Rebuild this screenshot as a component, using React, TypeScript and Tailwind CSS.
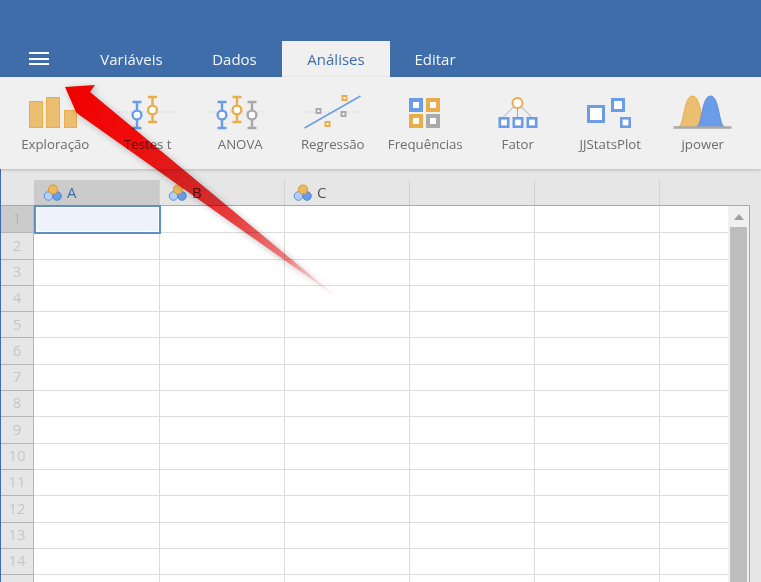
const font = { fontFamily: '"Open Sans", "Noto Sans", sans-serif' };

const BLUE = "#6b9ce8";
const ORANGE = "#e9ad4a";
const GRAY = "#a9a9a9";

const Whisker = ({ x, top, bottom, cy, color }: { x: number; top: number; bottom: number; cy: number; color: string }) => (
  <g stroke={color} strokeWidth="2.4" fill="none">
    <path d={`M${x - 4.5} ${top}H${x + 4.5}M${x} ${top}V${bottom}M${x - 4.5} ${bottom}H${x + 4.5}`} />
    <circle cx={x} cy={cy} r="4.4" fill="#fff" />
  </g>
);

const Box = ({ x, y, s, color, w = 2 }: { x: number; y: number; s: number; color: string; w?: number }) => (
  <rect x={x + w / 2} y={y + w / 2} width={s - w} height={s - w} fill="#fff" stroke={color} strokeWidth={w} />
);

const Dots = ({ x1, x2, y }: { x1: number; x2: number; y: number }) => (
  <path d={`M${x1} ${y}H${x2}`} stroke="#b9c6d8" strokeWidth="1" strokeDasharray="1 3" />
);

// each icon is drawn in a 92x50 box whose origin is the item's top left corner
const icons: { label: string; icon: React.ReactNode }[] = [
  {
    label: "Exploração",
    icon: (
      <g fill="#ecbe70" stroke="#e9ad4a" strokeWidth="1">
        <rect x="20.5" y="16.5" width="13" height="26" />
        <rect x="37.5" y="12.5" width="13" height="30" />
        <rect x="55.5" y="25.5" width="12" height="17" />
      </g>
    ),
  },
  {
    label: "Testes t",
    icon: (
      <g transform="translate(-101.5 0)">
        <Dots x1={118} x2={175} y={27} />
        <Whisker x={136.5} top={17} bottom={43} cy={30} color={BLUE} />
        <Whisker x={152} top={12} bottom={37} cy={25} color={ORANGE} />
      </g>
    ),
  },
  {
    label: "ANOVA",
    icon: (
      <g transform="translate(-194 0)">
        <Dots x1={210} x2={270} y={27} />
        <Whisker x={222} top={17} bottom={43} cy={30} color={BLUE} />
        <Whisker x={237} top={12} bottom={37} cy={25} color={ORANGE} />
        <Whisker x={252} top={17} bottom={43} cy={30} color={GRAY} />
      </g>
    ),
  },
  {
    label: "Regressão",
    icon: (
      <g transform="translate(-286.5 0)">
        <Dots x1={304} x2={362} y={27} />
        <path d="M304 43L360 11" stroke={BLUE} strokeWidth="1.6" />
        <Box x={315} y={23} s={6} color={GRAY} />
        <Box x={341} y={10} s={6} color={ORANGE} />
        <Box x={340} y={26} s={6} color={GRAY} />
        <Box x={324} y={36} s={6} color={ORANGE} />
      </g>
    ),
  },
  {
    label: "Frequências",
    icon: (
      <g transform="translate(-379 0)">
        <Box x={409} y={13} s={14} color={BLUE} w={4} />
        <Box x={426} y={13} s={14} color={ORANGE} w={4} />
        <Box x={409} y={29} s={14} color={ORANGE} w={4} />
        <Box x={426} y={29} s={14} color={GRAY} w={4} />
      </g>
    ),
  },
  {
    label: "Fator",
    icon: (
      <g transform="translate(-471.5 0)">
        <path d="M513 22L503 32M517 22V32M521 22L531 32" stroke={GRAY} strokeWidth="1" />
        <circle cx="517" cy="18" r="5" fill="#fff" stroke={ORANGE} strokeWidth="2" />
        <Box x={498} y={32} s={11} color={BLUE} w={2.6} />
        <Box x={512} y={32} s={11} color={BLUE} w={2.6} />
        <Box x={526} y={32} s={11} color={BLUE} w={2.6} />
      </g>
    ),
  },
  {
    label: "JJStatsPlot",
    icon: (
      <g transform="translate(-564 0)">
        <Box x={587} y={20} s={18} color={BLUE} w={3} />
        <Box x={611} y={13} s={14} color={BLUE} w={3} />
        <Box x={620} y={32} s={11} color={BLUE} w={2.6} />
      </g>
    ),
  },
  {
    label: "jpower",
    icon: (
      <g transform="translate(-656.5 0)">
        <path d="M678 42C684 40 683 11 692 11C701 11 700 40 706 42Z" fill="#ecbe70" stroke="#e9ad4a" />
        <path d="M696 42C702 40 701 11 710 11C719 11 718 40 724 42Z" fill="#6b9ce8" stroke="#5f8fd8" />
        <path d="M673 42.5H731" stroke={GRAY} strokeWidth="2.4" />
      </g>
    ),
  },
];

const columns = ["A", "B", "C", "", "", ""];
const rows = Array.from({ length: 15 }, (_, i) => i + 1);
const colWidth = ["w-[126px] pl-[9px]", "w-[125px] pl-[8px]", "w-[125px] pl-[8px]", "w-[125px]", "w-[125px]", "w-[68px] border-r-0"];

const VarIcon = () => (
  <svg width="20" height="18" viewBox="0 0 20 18" className="shrink-0">
    <circle cx="5.5" cy="12" r="4.3" fill="#b5cef5" stroke="#5a8fe0" strokeWidth="1" />
    <circle cx="14" cy="12" r="4.3" fill="#6b9ce8" stroke="#4f85d8" strokeWidth="1" />
    <circle cx="10" cy="5.5" r="4.6" fill="#ecb95f" stroke="#d99a35" strokeWidth="1" />
  </svg>
);

export default function App() {
  return (
    <div className="relative flex h-[582px] w-[761px] flex-col overflow-hidden bg-[#e6e6e6]" style={font}>
      <header className="flex h-[77px] shrink-0 items-end bg-[#3e6da9]">
        <div className="flex h-[36px] w-[76px] items-center pb-[1px] pl-[29px]">
          <div className="flex w-[20px] flex-col gap-[3.5px]">
            <div className="h-[2px] bg-white" />
            <div className="h-[2px] bg-white" />
            <div className="h-[2px] bg-white" />
          </div>
        </div>
        <div className="flex h-[36px] w-[111px] items-center justify-center text-[15px] text-[#f2f5fa]">Variáveis</div>
        <div className="flex h-[36px] w-[95px] items-center justify-center text-[15px] text-[#f2f5fa]">Dados</div>
        <div className="flex h-[36px] w-[108px] items-center justify-center bg-[#f0f0f0] text-[15px] text-[#3e6da9]">Análises</div>
        <div className="flex h-[36px] w-[90px] items-center justify-center text-[15px] text-[#f2f5fa]">Editar</div>
      </header>

      <div className="z-10 flex h-[92px] shrink-0 bg-[#f0f0f0] pl-[9px] pt-[8px] shadow-[0_1px_3px_rgba(0,0,0,0.2)]">
        {icons.map((item) => (
          <div key={item.label} className="flex w-[92.5px] flex-col items-center">
            <svg width="92.5" height="50" viewBox="0 0 92.5 50" className="shrink-0">
              {item.icon}
            </svg>
            <span className="text-[13.25px] leading-[19px] text-[#6d6d6d]">{item.label}</span>
          </div>
        ))}
      </div>

      <div className="flex min-h-0 flex-1 flex-col border-l border-[#3e6da9] pt-[11px]">
        <div className="flex h-[25px] shrink-0 pl-[33px]">
          {columns.map((name, i) => (
            <div
              key={i}
              className={`flex h-full items-center gap-[4px] border-r border-[#d2d2d2] text-[15px] ${colWidth[i]} ${
                i === 0 ? "bg-[#cbcbcb] text-[#3e6da9]" : "text-[#555]"
              }`}
            >
              {name && <VarIcon />}
              {name}
            </div>
          ))}
        </div>

        <div className="flex w-[749px] border-t border-r border-[#aaaaaa]">
          <div className="w-[33px] shrink-0">
            {rows.map((n) => (
              <div
                key={n}
                className={`flex items-center justify-center border-b border-r border-b-[#b4b4b4] border-r-[#b4b4b4] pb-[2px] text-[15px] ${
                  n === 1 ? "h-[27.3px] bg-[#cbcbcb] text-[#b6b6b6]" : "h-[26.3px] bg-[#e6e6e6] text-[#c6c6c6]"
                }`}
              >
                {n}
              </div>
            ))}
          </div>
          <div className="relative flex-1 bg-white">
            {rows.map((n) => (
              <div key={n} className={`flex border-b border-[#dcdcdc] ${n === 1 ? "h-[27.3px]" : "h-[26.3px]"}`}>
                {columns.map((_, i) => (
                  <div key={i} className={`h-full border-r border-[#dcdcdc] ${colWidth[i]}`} />
                ))}
              </div>
            ))}
            <div className="absolute left-0 -top-px h-[29px] w-[127px] border-2 border-[#5f8fc6] bg-[#eef2fa] shadow-[inset_0_0_0_1px_#fff]" />
          </div>
          <div className="flex w-[21px] shrink-0 flex-col items-center bg-[#f0f0f0]">
            <div className="flex h-[21px] w-full shrink-0 items-center justify-center">
              <div className="h-0 w-0 border-x-[5px] border-b-[6px] border-x-transparent border-b-[#a0a0a0]" />
            </div>
            <div className="w-[17px] flex-1 bg-[#bdbdbd]" />
          </div>
        </div>
      </div>

      <svg className="pointer-events-none absolute left-0 top-0 z-20 mix-blend-multiply drop-shadow-[2px_2px_3px_rgba(0,0,0,0.25)]" width="761" height="582" viewBox="0 0 761 582">
        <defs>
          <linearGradient id="arrowFade" gradientUnits="userSpaceOnUse" x1="65" y1="86" x2="338" y2="298">
            <stop offset="0" stopColor="#ff0000" />
            <stop offset="0.25" stopColor="#ff0c0c" />
            <stop offset="0.42" stopColor="#ee2020" />
            <stop offset="0.62" stopColor="#e63c3c" />
            <stop offset="0.82" stopColor="#ee8080" />
            <stop offset="1" stopColor="#fbdada" stopOpacity="0.2" />
          </linearGradient>
        </defs>
        <path d="M65 87L95 85L90 92L338 298L78 114L76 112Z" fill="url(#arrowFade)" />
      </svg>
    </div>
  );
}
